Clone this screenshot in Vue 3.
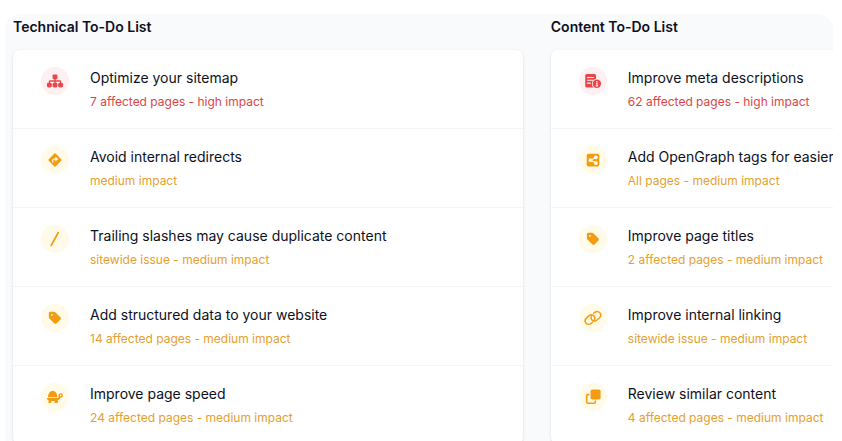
<script setup>
const columns = [
  {
    title: 'Technical To-Do List',
    items: [
      { icon: 'sitemap', title: 'Optimize your sitemap', detail: '7 affected pages - high impact', impact: 'high' },
      { icon: 'redirect', title: 'Avoid internal redirects', detail: 'medium impact', impact: 'medium' },
      { icon: 'slash', title: 'Trailing slashes may cause duplicate content', detail: 'sitewide issue - medium impact', impact: 'medium' },
      { icon: 'tag', title: 'Add structured data to your website', detail: '14 affected pages - medium impact', impact: 'medium' },
      { icon: 'turtle', title: 'Improve page speed', detail: '24 affected pages - medium impact', impact: 'medium' },
    ],
  },
  {
    title: 'Content To-Do List',
    items: [
      { icon: 'meta', title: 'Improve meta descriptions', detail: '62 affected pages - high impact', impact: 'high' },
      { icon: 'share', title: 'Add OpenGraph tags for easier', detail: 'All pages - medium impact', impact: 'medium' },
      { icon: 'tag', title: 'Improve page titles', detail: '2 affected pages - medium impact', impact: 'medium' },
      { icon: 'link', title: 'Improve internal linking', detail: 'sitewide issue - medium impact', impact: 'medium' },
      { icon: 'copy', title: 'Review similar content', detail: '4 affected pages - medium impact', impact: 'medium' },
    ],
  },
]
</script>

<template>
  <main class="page">
    <div class="panel">
      <div class="columns">
        <section v-for="column in columns" :key="column.title" class="column">
          <h2 class="heading">{{ column.title }}</h2>
          <ul class="card">
            <li v-for="item in column.items" :key="item.title" class="row" :class="item.impact">
              <span class="badge">
                <svg class="icon" viewBox="0 0 18 18" aria-hidden="true">
                  <g v-if="item.icon === 'sitemap'" fill="currentColor">
                    <rect x="6.6" y="2.6" width="4.8" height="4.6" rx="1" />
                    <rect x="1" y="10.8" width="4.8" height="4.6" rx="1.4" />
                    <rect x="6.6" y="10.8" width="4.8" height="4.6" rx="1.4" />
                    <rect x="12.2" y="10.8" width="4.8" height="4.6" rx="1.4" />
                    <path d="M9 6.5V12M3.4 12V9.8q0-.8.8-.8h9.6q.8 0 .8.8V12" fill="none" stroke="currentColor" stroke-width="1.3" />
                  </g>
                  <g v-else-if="item.icon === 'redirect'">
                    <rect x="4" y="4" width="10" height="10" rx="1.2" transform="rotate(45 9 9)" fill="currentColor" />
                    <path d="M6.7 11.5V9.4q0-1.3 1.3-1.3h2" fill="none" class="cut-line" stroke-width="1.4" />
                    <path d="M9.4 5.8 12.3 8.1 9.4 10.4Z" class="cut" />
                  </g>
                  <path v-else-if="item.icon === 'slash'" d="M5.2 15.4 12.2 2.8" fill="none" stroke="currentColor" stroke-width="1.8" stroke-linecap="round" />
                  <path
                    v-else-if="item.icon === 'tag'"
                    transform="translate(2.9 2) scale(.0273)"
                    fill="currentColor"
                    d="M0 80v149.500c0 17 6.700 33.300 18.700 45.300l176 176c25 25 65.500 25 90.500 0l133.500-133.500c25-25 25-65.500 0-90.500l-176-176C230.700 38.800 214.400 32 197.400 32H48C21.500 32 0 53.500 0 80zm112 32a32 32 0 1 1 0 64 32 32 0 1 1 0-64z"
                  />
                  <g v-else-if="item.icon === 'turtle'" fill="currentColor">
                    <path d="M2 9.200C2 5.400 3.800 2.900 6.700 2.900s4.700 2.500 4.700 6.300Z" />
                    <path d="M1.400 10h9.700c1 0 1.500-.7 1.500-1.600V7.200c0-1.200.8-1.900 2-1.900 1.400 0 2.300.9 2.300 2.200 0 1.400-.9 2.200-2.500 2.200-.7 1.300-1.600 2.200-2.600 2.600v2.200q0 .6-.6.6H9.300q-.5 0-.6-.5l-.5-1.700H5.500l-.5 1.700q-.1.500-.6.500H2.800q-.7 0-.5-.7l.5-1.900c-.9-.3-1.700-.8-1.900-1.700q-.1-.8.500-.8Z" />
                    <circle cx="14.700" cy="7.400" r=".8" class="cut" />
                  </g>
                  <g v-else-if="item.icon === 'meta'">
                    <rect x="1.200" y="2" width="10.800" height="13.600" rx="1.600" fill="currentColor" />
                    <path d="M3.400 5.500h6.200M3.400 8.300h5.600M3.400 11.100h3" class="cut-line" stroke-width="1.100" stroke-linecap="round" />
                    <circle cx="12.900" cy="11.800" r="5" class="cut" />
                    <circle cx="12.900" cy="11.800" r="4.200" fill="currentColor" />
                    <circle cx="12.900" cy="9.800" r=".8" class="cut" />
                    <path d="M12 11.400h1v2.400M11.800 13.900h2.300" fill="none" class="cut-line" stroke-width="1.100" />
                  </g>
                  <g v-else-if="item.icon === 'share'">
                    <rect x="2.700" y="2.800" width="12.600" height="12.600" rx="1.900" fill="currentColor" />
                    <path d="M12 6.500 6.500 9.200 12 11.900" fill="none" class="cut-line" stroke-width="1.200" />
                    <circle cx="11.900" cy="6.300" r="1.900" class="cut" />
                    <circle cx="6.500" cy="9.200" r="1.900" class="cut" />
                    <circle cx="11.900" cy="12.100" r="1.900" class="cut" />
                  </g>
                  <g v-else-if="item.icon === 'link'" fill="none" stroke="currentColor" stroke-width="1.500" stroke-linecap="round">
                    <path d="M8.300 13.400 7.400 14.200C6 15.500 3.500 15.700 2.100 14.200.8 12.800.9 10.700 2.200 9.400L4.900 6.900C6.400 5.600 8.600 5.600 9.900 7 11.100 8.300 11.100 10 10.100 11.300" />
                    <path d="M9.700 4.200 10.600 3.500C12.100 2.300 14.400 2.300 15.800 3.700 17.100 5.100 17 7.200 15.700 8.500L13 11C11.500 12.300 9.300 12.300 8 10.900 6.800 9.600 6.900 7.900 7.900 6.600" />
                  </g>
                  <g v-else-if="item.icon === 'copy'">
                    <path d="M5.400 6.600H4q-1.300 0-1.300 1.300v6q0 1.300 1.300 1.300h6q1.300 0 1.300-1.300v-1.400" fill="none" stroke="currentColor" stroke-width="1.600" />
                    <rect x="6.600" y="1.500" width="10" height="10" rx="1.700" fill="currentColor" />
                  </g>
                </svg>
              </span>
              <div class="text">
                <h3 class="title">{{ item.title }}</h3>
                <p class="detail">{{ item.detail }}</p>
              </div>
            </li>
          </ul>
        </section>
      </div>
    </div>
  </main>
</template>

<style>
body {
  margin: 0;
  background: #fff;
}
</style>

<style scoped>
.page {
  box-sizing: border-box;
  height: 100vh;
  overflow: hidden;
  padding: 14px 9px 0 5px;
  font-family: Inter, "Liberation Sans", sans-serif;
  color: #0c1122;
}

.panel {
  overflow: hidden;
  padding: 3px 0 16px 8px;
  border-radius: 16px;
  background: #f9fafb;
}

.columns {
  display: grid;
  grid-template-columns: 1fr 1fr;
  gap: 28px;
  width: calc(128% - 2px);
}

.heading {
  margin: 0 0 13px;
  font-size: 14px;
  font-weight: 600;
  line-height: 20px;
}

.card {
  margin: 0;
  padding: 0;
  border-radius: 7px;
  background: #fff;
  box-shadow: 0 1px 3px rgb(0 0 0 / 12%);
  list-style: none;
}

.row {
  display: flex;
  align-items: flex-start;
  gap: 21px;
  padding: 17px 28px;
}

.row + .row {
  border-top: 1px solid #f3f4f6;
}

.high {
  --tone: #dc4548;
  --icon: #e8464a;
  --tint: #fef0f0;
}

.medium {
  --tone: #e5a02f;
  --icon: #f39c12;
  --tint: #fffbe8;
}

.badge {
  display: grid;
  flex: none;
  place-items: center;
  width: 28px;
  height: 28px;
  border-radius: 50%;
  background: var(--tint);
  color: var(--icon);
}

.icon {
  width: 18px;
  height: 18px;
}

.cut {
  fill: var(--tint);
}

.cut-line {
  stroke: var(--tint);
}

.text {
  white-space: nowrap;
}

.title {
  margin: 0 0 4px;
  font-size: 14px;
  font-weight: 400;
  line-height: 22px;
}

.detail {
  margin: 0;
  color: var(--tone);
  font-size: 12px;
  line-height: 18px;
}
</style>
